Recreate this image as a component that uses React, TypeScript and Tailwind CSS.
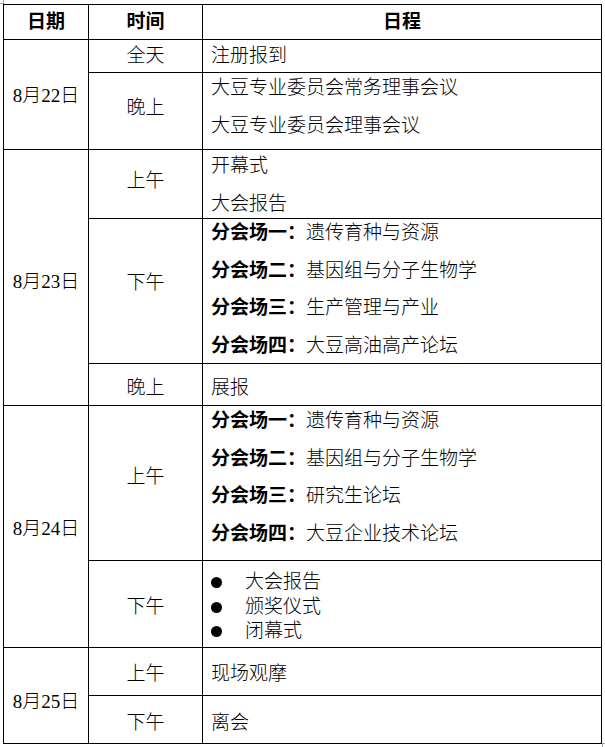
const font = {
  fontFamily: '"Liberation Serif", "Noto Sans CJK SC", serif',
};

type Line = { bold?: string; text: string };

function Lines({ items }: { items: Line[] }) {
  return (
    <div className="flex flex-col gap-[11.5px]">
      {items.map((l, i) => (
        <div key={i} className="leading-[26px] whitespace-nowrap">
          {l.bold && <span className="font-bold">{l.bold}</span>}
          {l.text}
        </div>
      ))}
    </div>
  );
}

function Bullets({ items }: { items: string[] }) {
  return (
    <div className="flex flex-col">
      {items.map((t) => (
        <div key={t} className="flex items-center leading-[24.5px]">
          <span className="mr-[23px] inline-block h-[11px] w-[11px] rounded-full bg-black" />
          {t}
        </div>
      ))}
    </div>
  );
}

const td = "border-r border-b border-black p-0";
const center = `${td} text-center align-middle`;
const topCell = `${td} align-top pl-[8px]`;
const midCell = `${td} align-middle pl-[8px]`;

export default function App() {
  return (
    <div className="relative h-[747px] w-[605px] bg-white font-light text-black" style={font}>
      {/* crop marks */}
      <div className="absolute left-[3px] top-0 h-[4px] w-px bg-gray-400" />
      <div className="absolute left-0 top-[3px] h-px w-[3px] bg-gray-400" />
      <div className="absolute left-[602px] top-[743px] h-[4px] w-px bg-gray-400" />
      <div className="absolute left-[602px] top-[743px] h-px w-[3px] bg-gray-400" />

      <div className="pl-[3px] pt-[4px]">
        <table
          className="table-fixed border-separate border-l border-t border-black text-[19px]"
          style={{ borderSpacing: 0, width: 599 }}
        >
          <colgroup>
            <col style={{ width: 85 }} />
            <col style={{ width: 114 }} />
            <col style={{ width: 399 }} />
          </colgroup>
          <tbody>
            <tr className="h-[35px]">
              <td className={`${center} font-bold`}>日期</td>
              <td className={`${center} font-bold`}>时间</td>
              <td className={`${center} font-bold`}>日程</td>
            </tr>

            <tr className="h-[33px]">
              <td rowSpan={2} className={`${center} pt-[3px]`}>8月22日</td>
              <td className={center}>全天</td>
              <td className={midCell}>注册报到</td>
            </tr>
            <tr className="h-[77px]">
              <td className={`${center} pb-[5px]`}>晚上</td>
              <td className={`${topCell} pt-[2px]`}>
                <Lines
                  items={[
                    { text: "大豆专业委员会常务理事会议" },
                    { text: "大豆专业委员会理事会议" },
                  ]}
                />
              </td>
            </tr>

            <tr className="h-[69px]">
              <td rowSpan={3} className={`${center} pt-[9px]`}>8月23日</td>
              <td className={`${center} pb-[6px]`}>上午</td>
              <td className={`${topCell} pt-[3px]`}>
                <Lines items={[{ text: "开幕式" }, { text: "大会报告" }]} />
              </td>
            </tr>
            <tr className="h-[145px]">
              <td className={`${center} pb-[16px]`}>下午</td>
              <td className={`${topCell} pt-[1px]`}>
                <Lines
                  items={[
                    { bold: "分会场一：", text: "遗传育种与资源" },
                    { bold: "分会场二：", text: "基因组与分子生物学" },
                    { bold: "分会场三：", text: "生产管理与产业" },
                    { bold: "分会场四：", text: "大豆高油高产论坛" },
                  ]}
                />
              </td>
            </tr>
            <tr className="h-[42px]">
              <td className={`${center} pt-[7px]`}>晚上</td>
              <td className={`${midCell} pt-[7px]`}>展报</td>
            </tr>

            <tr className="h-[155px]">
              <td rowSpan={2} className={`${center} pt-[5px]`}>8月24日</td>
              <td className={`${center} pb-[12px]`}>上午</td>
              <td className={`${topCell} pt-[2px]`}>
                <Lines
                  items={[
                    { bold: "分会场一：", text: "遗传育种与资源" },
                    { bold: "分会场二：", text: "基因组与分子生物学" },
                    { bold: "分会场三：", text: "研究生论坛" },
                    { bold: "分会场四：", text: "大豆企业技术论坛" },
                  ]}
                />
              </td>
            </tr>
            <tr className="h-[87px]">
              <td className={`${center} pt-[7px]`}>下午</td>
              <td className={`${midCell} pt-[6px]`}>
                <Bullets items={["大会报告", "颁奖仪式", "闭幕式"]} />
              </td>
            </tr>

            <tr className="h-[48px]">
              <td rowSpan={2} className={`${center} pt-[13px]`}>8月25日</td>
              <td className={`${center} pt-[5px]`}>上午</td>
              <td className={`${midCell} pt-[5px]`}>现场观摩</td>
            </tr>
            <tr className="h-[48px]">
              <td className={`${center} pt-[7px]`}>下午</td>
              <td className={`${midCell} pt-[7px]`}>离会</td>
            </tr>
          </tbody>
        </table>
      </div>
    </div>
  );
}
